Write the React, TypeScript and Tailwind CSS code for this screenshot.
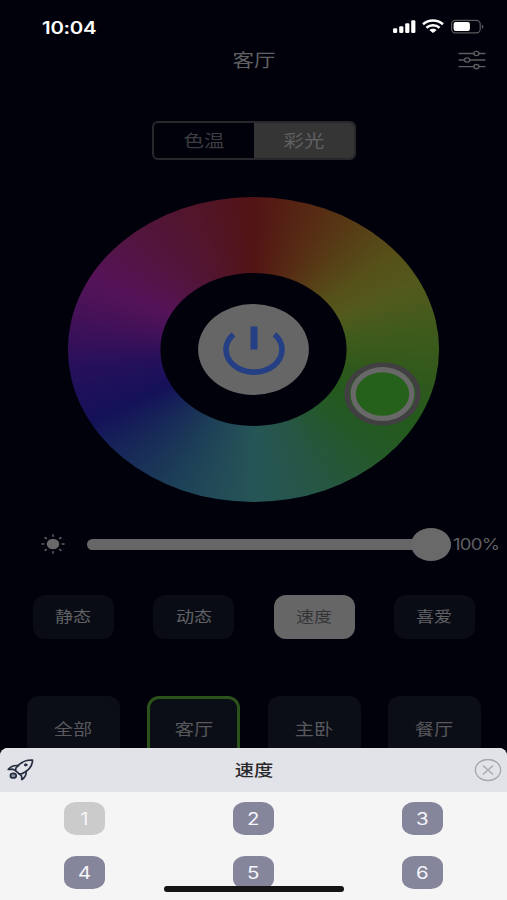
import type { ReactNode } from 'react';
import clsx from 'clsx';

const modes = ['静态', '动态', '速度', '喜爱'];
const rooms = ['全部', '客厅', '主卧', '餐厅'];
const speeds = [1, 2, 3, 4, 5, 6];

function Wide({ children, className }: { children: ReactNode; className?: string }) {
  return <span className={clsx('inline-block whitespace-nowrap scale-x-[1.2]', className)}>{children}</span>;
}

function StatusIcons() {
  return (
    <svg width="92" height="16" viewBox="0 0 92 16" fill="#fff">
      <rect x="1" y="9.3" width="4.2" height="4.7" rx="1.2" />
      <rect x="7.2" y="7.2" width="4.2" height="6.8" rx="1.2" />
      <rect x="13.2" y="4.3" width="4.2" height="9.7" rx="1.2" />
      <rect x="19.2" y="1.2" width="4.2" height="12.8" rx="1.2" />
      <g fill="none" stroke="#fff" strokeWidth="2.5">
        <path d="M31 5.2C36.8.3 45.2.3 51 5.2" />
        <path d="M34.4 8.7c3.8-3.3 9.4-3.3 13.2 0" />
      </g>
      <path d="M37.3 10.9c2-1.7 5.4-1.7 7.4 0L41 14z" />
      <rect x="59.6" y="1.3" width="28.6" height="12.6" rx="3.8" fill="none" stroke="#59595d" strokeWidth="1.2" />
      <rect x="61.6" y="3.1" width="16.3" height="9" rx="2" />
      <path d="M89.8 5.4c2.2.8 2.2 3.6 0 4.4z" fill="#59595d" />
    </svg>
  );
}

function SettingsIcon() {
  return (
    <svg width="28" height="20" viewBox="0 0 28 20" fill="none" stroke="#5d5d60" strokeWidth="1.4" strokeLinecap="round">
      <path d="M1 3.5h14.8M21 3.5h6M1 10h5.5M11.7 10H27M1 16.6h14.8M21 16.6h6" />
      <ellipse cx="18.4" cy="3.5" rx="2.6" ry="2.1" />
      <ellipse cx="9.1" cy="10" rx="2.6" ry="2.1" />
      <ellipse cx="18.4" cy="16.6" rx="2.6" ry="2.1" />
    </svg>
  );
}

function SunIcon() {
  return (
    <svg width="24" height="20" viewBox="-12 -10 24 20" fill="#69696a" stroke="#69696a" strokeWidth="1.5" strokeLinecap="round">
      <ellipse rx="6.3" ry="5.3" stroke="none" />
      <path d="M0-9v1.3M0 7.7V9M-11 0h1.7M9.3 0H11M-7.9-6.4l1.2.9M6.7 5.5l1.2.9M-7.9 6.4l1.2-.9M6.7-5.5l1.2-.9" />
    </svg>
  );
}

function RocketIcon() {
  return (
    <svg width="28" height="24" viewBox="0 0 28 24" fill="none" stroke="#252d40" strokeWidth="1.7" strokeLinejoin="round" strokeLinecap="round">
      <path d="M26.5 2C19.8 1.8 14.5 3.7 9.8 10.200L9.500 12.600L13.200 15.900L16.100 15.600C23.600 12.300 26.500 7.700 26.500 2Z" />
      <path d="M12.600 7.600C7.500 7 4.600 8.400 2.200 11.500L6.800 11.200L9.500 12.600" />
      <path d="M20.200 13.200C20.400 17 18.900 19.500 15.800 21.500L15.500 17.800L13.200 15.900" />
      <ellipse cx="7.300" cy="17.700" rx="2.900" ry="2.300" fill="#8c919c" />
      <ellipse cx="19.700" cy="6.900" rx="1.300" ry="1.100" fill="#252d40" strokeWidth="1" />
    </svg>
  );
}

function CloseIcon() {
  return (
    <svg width="28" height="24" viewBox="0 0 28 24" fill="none" stroke="#a6a7ad" strokeWidth="1.3">
      <ellipse cx="14" cy="12" rx="12.6" ry="10.5" />
      <path d="M8.9 7.5l10.2 9M19.1 7.5l-10.2 9" />
    </svg>
  );
}

function ColorWheel() {
  return (
    <div className="relative mx-auto mt-[37px] flex h-[305px] w-[371px] shrink-0 items-center justify-center">
      <div className="flex size-[305px] shrink-0 scale-x-[1.217] items-center justify-center rounded-full bg-[conic-gradient(#531414,#573114_25deg,#565019_50deg,#53591d_64deg,#415b1b_80deg,#32591c_100deg,#24591c_118deg,#245927_135deg,#265643_158deg,#265557_180deg,#1d4057_205deg,#172958_225deg,#141159_242deg,#25105b_262deg,#431158_282deg,#551358_298deg,#52153e_320deg,#521526_345deg,#531414)]">
        <div className="flex size-[153px] items-center justify-center rounded-full bg-[#01010b]">
          <div className="size-[91px] rounded-full bg-[#666667]" />
        </div>
      </div>
      <svg className="absolute left-[154px] top-[128px]" width="64" height="52" viewBox="0 0 64 52" fill="none" stroke="#243f83">
        <path d="M11.5 9.3A28 22.5 0 1 0 52.5 9.3" strokeWidth="5.6" />
        <path d="M32 1.5v23" strokeWidth="7" />
      </svg>
      <svg className="absolute left-[275px] top-[164px]" width="80" height="66" viewBox="0 0 80 66">
        <ellipse cx="39.500" cy="33" rx="35.5" ry="29" fill="#26611c" stroke="#413f41" strokeWidth="5.2" />
        <ellipse cx="39.500" cy="33" rx="29.3" ry="24.4" fill="none" stroke="#686868" strokeWidth="5.2" />
      </svg>
    </div>
  );
}

export default function App() {
  return (
    <main className="relative flex h-[900px] w-[507px] flex-col overflow-hidden bg-[#01010b] font-['Inter','Noto_Sans_CJK_SC',sans-serif] text-[#606063]">
      <header className="flex h-[42px] shrink-0 items-center justify-between pl-[42px] pr-[23px] pt-3">
        <Wide className="origin-left pt-0.5 text-[17px] font-semibold leading-5 tracking-[-0.2px] text-white">10:04</Wide>
        <StatusIcons />
      </header>
      <nav className="grid h-9 shrink-0 grid-cols-3 items-center pr-[21px] pl-[21px]">
        <span />
        <h1 className="pt-0.5 text-center text-lg leading-6"><Wide>客厅</Wide></h1>
        <div className="flex justify-end"><SettingsIcon /></div>
      </nav>
      <div className="mx-auto mt-[43px] flex h-[39px] w-[204px] shrink-0 overflow-hidden rounded-md border-2 border-[#28282c] text-[17px] text-[#3c3c40]">
        <button className="w-[100px] pt-0.5"><Wide>色温</Wide></button>
        <button className="flex-1 bg-[#353535] pt-0.5 text-[#606062]"><Wide>彩光</Wide></button>
      </div>
      <ColorWheel />
      <section className="mt-[25px] flex h-[34px] shrink-0 items-center pl-[41px]">
        <SunIcon />
        <div className="ml-[22px] flex h-[11px] w-[364px] shrink-0 items-center justify-end rounded-full bg-[#666667]">
          <div className="h-[33px] w-10 shrink-0 rounded-[50%] bg-[#69696a]" />
        </div>
        <Wide className="ml-0.5 origin-left pt-0.5 text-[15.5px] tracking-[-0.6px]">100%</Wide>
      </section>
      <section className="mt-[34px] flex shrink-0 justify-between pl-[33px] pr-8">
        {modes.map((label) => (
          <button
            key={label}
            className={clsx(
              'h-11 w-[81px] rounded-xl text-[15px]',
              label === '速度' ? 'bg-[#666667] text-[#343437]' : 'bg-[#090c14] text-[#626267]',
            )}
          >
            <Wide>{label}</Wide>
          </button>
        ))}
      </section>
      <section className="mt-[57px] flex h-[52px] shrink-0 justify-between overflow-hidden pl-[27px] pr-[26px]">
        {rooms.map((label) => (
          <button
            key={label}
            className={clsx(
              'h-[65px] w-[93px] rounded-xl border-3 bg-[#0b0e16] text-base text-[#58585d]',
              label === '客厅' ? 'border-[#2c521b]' : 'border-transparent',
            )}
          >
            <Wide>{label}</Wide>
          </button>
        ))}
      </section>
      <section className="h-[152px] shrink-0 overflow-hidden rounded-t-lg bg-[#f5f5f6]">
        <div className="grid h-11 grid-cols-3 items-center bg-[#e2e3e8] pl-1.5 pr-[5px]">
          <RocketIcon />
          <h2 className="text-center text-base font-medium leading-6 text-[#29292c]"><Wide>速度</Wide></h2>
          <div className="flex justify-end"><CloseIcon /></div>
        </div>
        <div className="grid grid-cols-3 justify-items-center gap-y-[21px] pt-2.5">
          {speeds.map((speed) => (
            <button
              key={speed}
              className={clsx(
                'h-[33px] w-[41px] rounded-[12px/10px] pt-0.5 text-[17px] text-[#f5f5fa]',
                speed === 1 ? 'bg-[#cbcbcb]' : 'bg-[#85859c]',
              )}
            >
              <Wide>{speed}</Wide>
            </button>
          ))}
        </div>
      </section>
      <div className="absolute bottom-[8.5px] left-[164px] h-[5.5px] w-[180px] rounded-full bg-[#141414]" />
    </main>
  );
}
